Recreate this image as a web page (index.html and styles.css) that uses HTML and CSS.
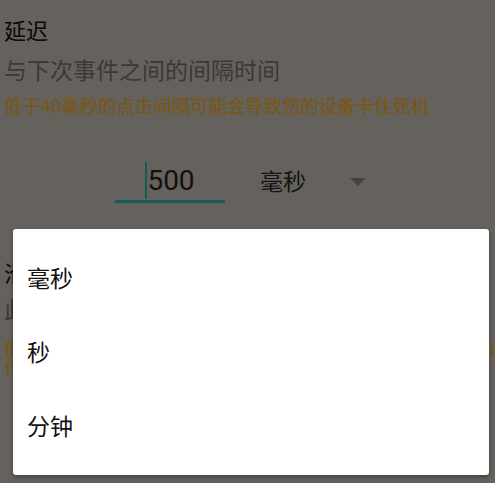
FILE: index.html
```html
<!DOCTYPE html>
<html lang="zh">
<head>
<meta charset="utf-8">
<link rel="stylesheet" href="styles.css">
</head>
<body>
<div class="page">
  <section class="setting">
    <div class="title">延迟</div>
    <div class="subtitle">与下次事件之间的间隔时间</div>
    <div class="warning">低于40毫秒的点击间隔可能会导致您的设备卡住死机</div>
    <div class="input-row">
      <div class="field"><span class="cursor"></span><span class="value">500</span></div>
      <div class="spinner"><span class="unit">毫秒</span><span class="arrow"></span></div>
    </div>
  </section>
  <section class="setting second">
    <div class="title">滑动持续时间</div>
    <div class="subtitle">此手势从开始到结束的持续时间</div>
    <div class="warning">低于300毫秒的滑动持续时间可能会导致应用无法识别手势动作</div>
  </section>
</div>
<div class="menu">
  <div class="item">毫秒</div>
  <div class="item">秒</div>
  <div class="item">分钟</div>
</div>
</body>
</html>
```
FILE: styles.css
```css
html, body {
  margin: 0;
  padding: 0;
}
body {
  width: 495px;
  height: 483px;
  overflow: hidden;
  background: #65615c;
  font-family: "Noto Sans CJK SC", "Noto Sans", sans-serif;
  position: relative;
}
.page {
  padding: 14px 0 0 4px;
}
.setting {
  display: flex;
  flex-direction: column;
}
.title {
  font-size: 22px;
  line-height: 30px;
  color: #0a0a0a;
}
.subtitle {
  margin-top: 10px;
  font-size: 23px;
  line-height: 30px;
  color: #3b3936;
}
.warning {
  margin-top: 9px;
  font-size: 18.4px;
  line-height: 24px;
  color: #7b560c;
}
.input-row {
  margin-top: 38px;
  height: 50px;
  display: flex;
  align-items: center;
}
.field {
  margin-left: 111px;
  width: 110px;
  height: 46px;
  border-bottom: 3px solid #0f5f57;
  display: flex;
  align-items: center;
  justify-content: center;
  box-sizing: border-box;
}
.cursor {
  width: 2px;
  height: 37px;
  background: #0f5f57;
  margin-top: 4px;
}
.value {
  font-family: Roboto, "Noto Sans", sans-serif;
  font-size: 28px;
  color: #111;
  line-height: 40px;
  margin-top: 4px;
}
.spinner {
  margin-left: 35px;
  width: 106px;
  display: flex;
  align-items: center;
  justify-content: space-between;
}
.unit {
  font-size: 23px;
  color: #141414;
  line-height: 30px;
}
.arrow {
  width: 0;
  height: 0;
  border-left: 8px solid transparent;
  border-right: 8px solid transparent;
  border-top: 8px solid #46433f;
  margin-top: 3px;
}
.second {
  margin-top: 52px;
}
.second .subtitle {
  margin-top: 6px;
}
.second .warning {
  margin-top: 15px;
  line-height: 19px;
}
.menu {
  position: absolute;
  left: 13px;
  top: 229px;
  width: 476px;
  padding: 11px 0 13px;
  background: #fff;
  border-radius: 3px;
  box-shadow: 0 2px 4px rgba(0, 0, 0, 0.35);
  display: flex;
  flex-direction: column;
}
.item {
  height: 74px;
  display: flex;
  align-items: center;
  padding-left: 14px;
  font-size: 23px;
  color: #111;
}
```
